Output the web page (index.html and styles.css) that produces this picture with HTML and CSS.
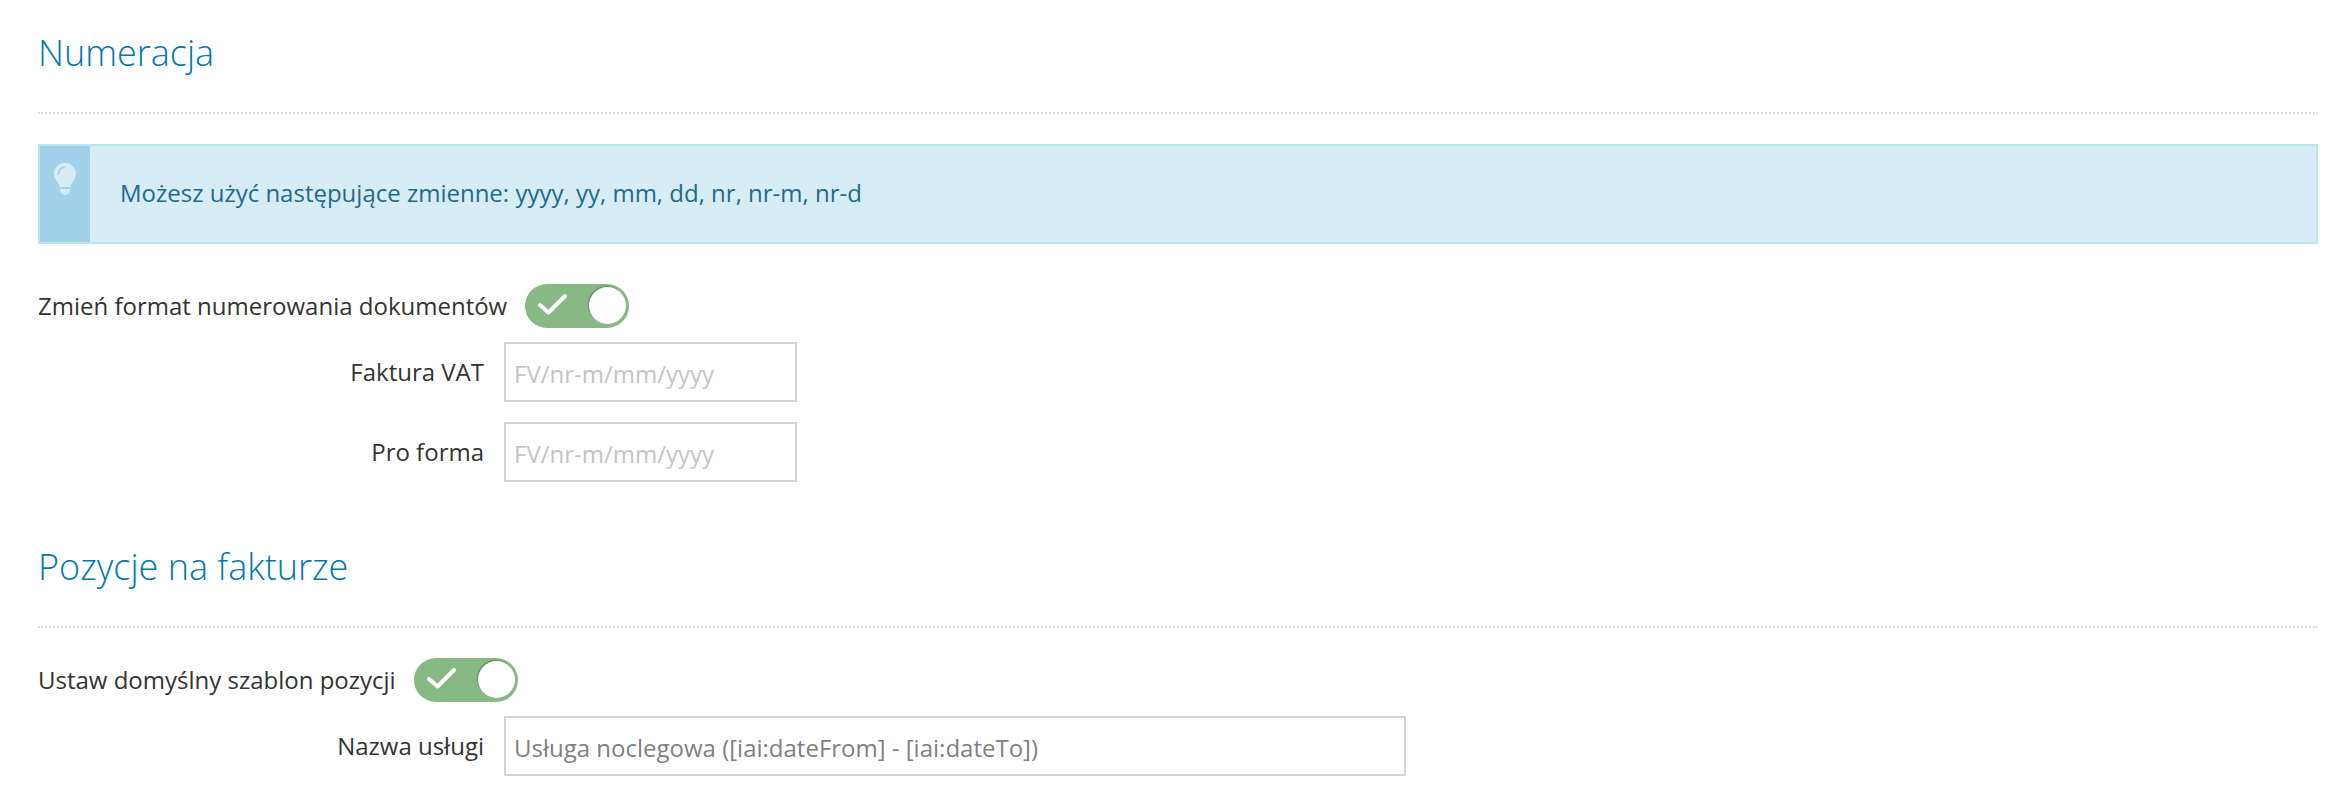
FILE: index.html
```html
<!DOCTYPE html>
<html lang="pl">
<head>
<meta charset="utf-8">
<title>Numeracja</title>
<link rel="stylesheet" href="styles.css">
</head>
<body>
<main class="page">
  <h2 class="section-title">Numeracja</h2>
  <div class="alert">
    <div class="alert-icon">
      <svg width="22" height="32" viewBox="0 0 22 32" aria-hidden="true">
        <path class="bulb" d="M11 0C4.900 0 0 4.900 0 10.800c0 3 1.100 5.200 2.700 7.300 1.400 1.800 2.700 3.700 3 6h10.600c.3-2.300 1.600-4.200 3-6 1.600-2.100 2.700-4.300 2.700-7.300C22 4.900 17.100 0 11 0z"/>
        <path class="bulb" d="M5.800 26h10.400c-.1 3.400-2.300 6-5.200 6s-5.100-2.600-5.200-6z"/>
        <path class="glint" d="M4.500 11C4.500 7.300 7 4.600 10 4.200"/>
      </svg>
    </div>
    <p class="alert-text">Możesz użyć następujące zmienne: yyyy, yy, mm, dd, nr, nr-m, nr-d</p>
  </div>

  <div class="toggle-row first">
    <span class="toggle-label">Zmień format numerowania dokumentów</span>
    <span class="toggle">
      <svg class="check" width="32" height="24" viewBox="0 0 32 24" aria-hidden="true"><path d="M3 12l8.500 7.500L28 3"/></svg>
      <span class="knob"></span>
    </span>
  </div>
  <div class="field">
    <label class="field-label" for="vat">Faktura VAT</label>
    <input class="input short" id="vat" type="text" placeholder="FV/nr-m/mm/yyyy">
  </div>
  <div class="field spaced">
    <label class="field-label" for="pro">Pro forma</label>
    <input class="input short" id="pro" type="text" placeholder="FV/nr-m/mm/yyyy">
  </div>

  <h2 class="section-title second">Pozycje na fakturze</h2>
  <div class="toggle-row">
    <span class="toggle-label">Ustaw domyślny szablon pozycji</span>
    <span class="toggle">
      <svg class="check" width="32" height="24" viewBox="0 0 32 24" aria-hidden="true"><path d="M3 12l8.500 7.500L28 3"/></svg>
      <span class="knob"></span>
    </span>
  </div>
  <div class="field">
    <label class="field-label" for="name">Nazwa usługi</label>
    <input class="input long" id="name" type="text" value="Usługa noclegowa ([iai:dateFrom] - [iai:dateTo])">
  </div>
</main>
</body>
</html>
```
FILE: styles.css
```css
* { box-sizing: border-box; }
body {
  margin: 0;
  background: #fff;
  font-family: "Open Sans", sans-serif;
  font-size: 24px;
  color: #333;
}
.page { padding: 28px 30px 0 38px; }
.section-title {
  margin: 0;
  height: 86px;
  font-size: 36px;
  line-height: 50px;
  font-weight: 300;
  color: #0078ad;
  border-bottom: 2px dotted #ddd;
}
.section-title.second { margin-top: 60px; }
.alert {
  display: flex;
  align-items: stretch;
  height: 100px;
  margin-top: 30px;
  background: #d7edf6;
  border: 2px solid #b9e6ef;
}
.alert-icon {
  flex: 0 0 50px;
  background: #a3d1ea;
  padding: 17px 0 0 14px;
}
.alert-icon svg { display: block; }
.bulb { fill: #d7edf6; }
.glint { fill: none; stroke: #a3d1ea; stroke-width: 2; stroke-linecap: round; }
.alert-text {
  margin: 0 0 2px 30px;
  align-self: center;
  color: #1f6a8c;
  line-height: 30px;
}
.toggle-row {
  display: flex;
  align-items: center;
  gap: 18px;
  margin-top: 30px;
  height: 44px;
}
.toggle-row.first { margin-top: 40px; }
.toggle-label { padding-bottom: 2px; }
.toggle {
  position: relative;
  display: block;
  width: 104px;
  height: 44px;
  border-radius: 22px;
  background: #88b985;
}
.check { position: absolute; left: 12px; top: 9px; }
.check path {
  fill: none;
  stroke: #fff;
  stroke-width: 4;
  stroke-linecap: round;
  stroke-linejoin: round;
}
.knob {
  position: absolute;
  right: 3px;
  top: 3px;
  width: 37px;
  height: 37px;
  border-radius: 50%;
  background: #fff;
  box-shadow: -1px -1px 1px rgba(50, 90, 50, .45);
}
.field {
  display: flex;
  align-items: center;
  gap: 20px;
  margin-top: 14px;
}
.field.spaced { margin-top: 20px; }
.field-label {
  flex: 0 0 446px;
  text-align: right;
  padding-bottom: 2px;
}
.input {
  height: 60px;
  padding: 3px 8px 0;
  border: 2px solid #d3d3d3;
  border-radius: 0;
  background: #fff;
  font: inherit;
  color: #808080;
  outline: none;
}
.input::placeholder { color: #c4c4c4; opacity: 1; }
.input.short { width: 293px; }
.input.long { width: 902px; }
```
